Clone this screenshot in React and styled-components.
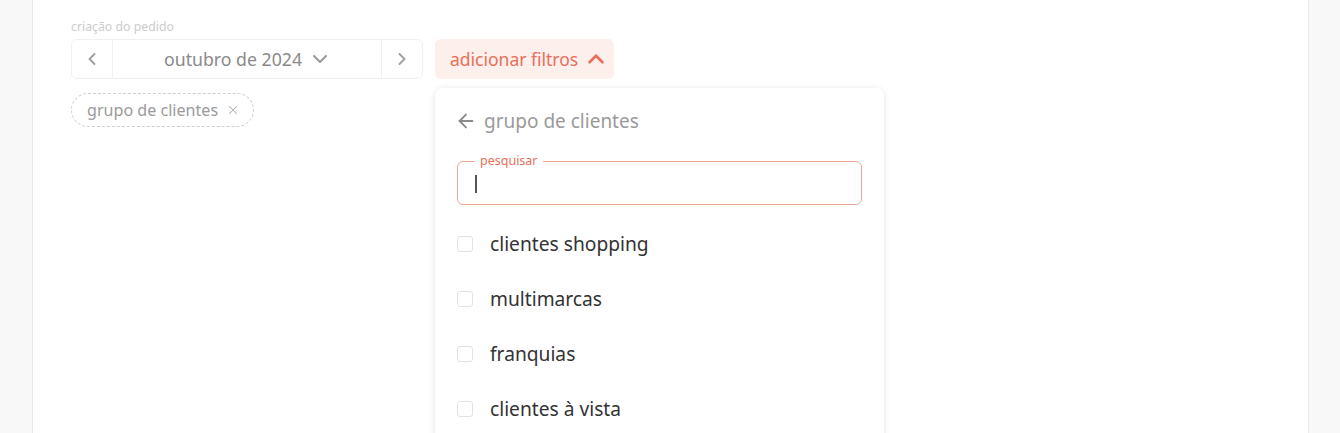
import styled, { createGlobalStyle } from 'styled-components';
import { ChevronLeft, ChevronRight, ChevronDown, ChevronUp, ArrowLeft, X } from 'lucide-react';

const GlobalStyle = createGlobalStyle`
  body {
    margin: 0;
    background: #f8f8f8;
    font-family: 'Noto Sans', 'Lato', sans-serif;
  }
`;

const groups = ['clientes shopping', 'multimarcas', 'franquias', 'clientes à vista'];

export default function App() {
  return (
    <Page>
      <GlobalStyle />
      <Panel>
        <FieldLabel>criação do pedido</FieldLabel>
        <Row>
          <MonthPicker>
            <NavButton>
              <ChevronLeft size={20} strokeWidth={2.3} />
            </NavButton>
            <MonthValue>
              outubro de 2024
              <ChevronDown size={24} strokeWidth={2.1} />
            </MonthValue>
            <NavButton $right>
              <ChevronRight size={20} strokeWidth={2.3} />
            </NavButton>
          </MonthPicker>

          <FilterWrap>
            <FilterButton>
              adicionar filtros
              <ChevronUp size={26} strokeWidth={2.4} />
            </FilterButton>

            <Dropdown>
              <DropdownHeader>
                <ArrowLeft size={22} strokeWidth={2} />
                grupo de clientes
              </DropdownHeader>

              <SearchBox>
                <SearchLegend>pesquisar</SearchLegend>
                <Caret />
              </SearchBox>

              <OptionList>
                {groups.map((g) => (
                  <Option key={g}>
                    <Checkbox />
                    {g}
                  </Option>
                ))}
              </OptionList>
            </Dropdown>
          </FilterWrap>
        </Row>

        <Chip>
          grupo de clientes
          <X size={14} strokeWidth={1.8} />
        </Chip>
      </Panel>
    </Page>
  );
}

const Page = styled.div`
  display: flex;
  height: 433px;
  padding: 0 31px 0 32px;
  overflow: hidden;
`;

const Panel = styled.div`
  flex: 1;
  background: #fff;
  border-left: 1px solid #e8e8e8;
  border-right: 1px solid #e8e8e8;
  padding: 19px 38px 0;
`;

const FieldLabel = styled.div`
  font-size: 12.3px;
  line-height: 16px;
  color: #cccccc;
  margin-bottom: 4px;
`;

const Row = styled.div`
  display: flex;
  align-items: flex-start;
  gap: 12px;
`;

const MonthPicker = styled.div`
  display: flex;
  width: 352px;
  height: 40px;
  box-sizing: border-box;
  border: 1px solid #f0f0f0;
  border-radius: 6px;
`;

const NavButton = styled.div`
  width: 40px;
  display: flex;
  align-items: center;
  justify-content: center;
  color: #a0a0a0;
  border-left: ${(p) => (p.$right ? '1px solid #f0f0f0' : 'none')};
  border-right: ${(p) => (p.$right ? 'none' : '1px solid #f0f0f0')};
`;

const MonthValue = styled.div`
  flex: 1;
  display: flex;
  align-items: center;
  justify-content: center;
  gap: 6px;
  padding-left: 2px;
  font-size: 17.7px;
  color: #8a8a8a;
  svg {
    color: #9a9a9a;
  }
`;

const FilterWrap = styled.div`
  position: relative;
`;

const FilterButton = styled.div`
  display: flex;
  align-items: center;
  gap: 5px;
  height: 40px;
  padding: 0 5px 0 15px;
  box-sizing: border-box;
  background: #fdefec;
  border-radius: 6px;
  color: #e8705a;
  font-size: 17.5px;
`;

const Dropdown = styled.div`
  position: absolute;
  top: 49px;
  left: 0;
  width: 449px;
  height: 400px;
  box-sizing: border-box;
  padding: 21px 22px 0;
  background: #fff;
  border-radius: 8px;
  box-shadow: 0 1px 6px rgba(0, 0, 0, 0.12);
`;

const DropdownHeader = styled.div`
  display: flex;
  align-items: center;
  gap: 7px;
  height: 24px;
  margin-left: -2px;
  font-size: 19px;
  color: #9a9a9a;
  svg {
    color: #8a8a8a;
  }
`;

const SearchBox = styled.div`
  position: relative;
  margin-top: 28px;
  height: 44px;
  box-sizing: border-box;
  border: 1px solid #f2a898;
  border-radius: 6px;
  display: flex;
  align-items: center;
  padding-left: 17px;
`;

const SearchLegend = styled.span`
  position: absolute;
  top: -8px;
  left: 17px;
  padding: 0 5px;
  background: #fff;
  font-size: 12.5px;
  line-height: 14px;
  color: #e8705a;
`;

const Caret = styled.span`
  width: 2px;
  height: 18px;
  margin-top: 2px;
  background: #555;
`;

const OptionList = styled.div`
  margin-top: 11px;
`;

const Option = styled.div`
  display: flex;
  align-items: center;
  gap: 17px;
  height: 55px;
  font-size: 19.2px;
  color: #333;
`;

const Checkbox = styled.span`
  width: 16px;
  height: 16px;
  box-sizing: border-box;
  border: 1.5px solid #e2e2e2;
  border-radius: 3px;
`;

const Chip = styled.div`
  display: inline-flex;
  align-items: center;
  gap: 8px;
  margin-top: 14px;
  height: 34px;
  box-sizing: border-box;
  padding: 0 13px 0 15px;
  border: 1px dashed #cfcfcf;
  border-radius: 17px;
  font-size: 16.1px;
  color: #9a9a9a;
  svg {
    color: #b0b0b0;
  }
`;
